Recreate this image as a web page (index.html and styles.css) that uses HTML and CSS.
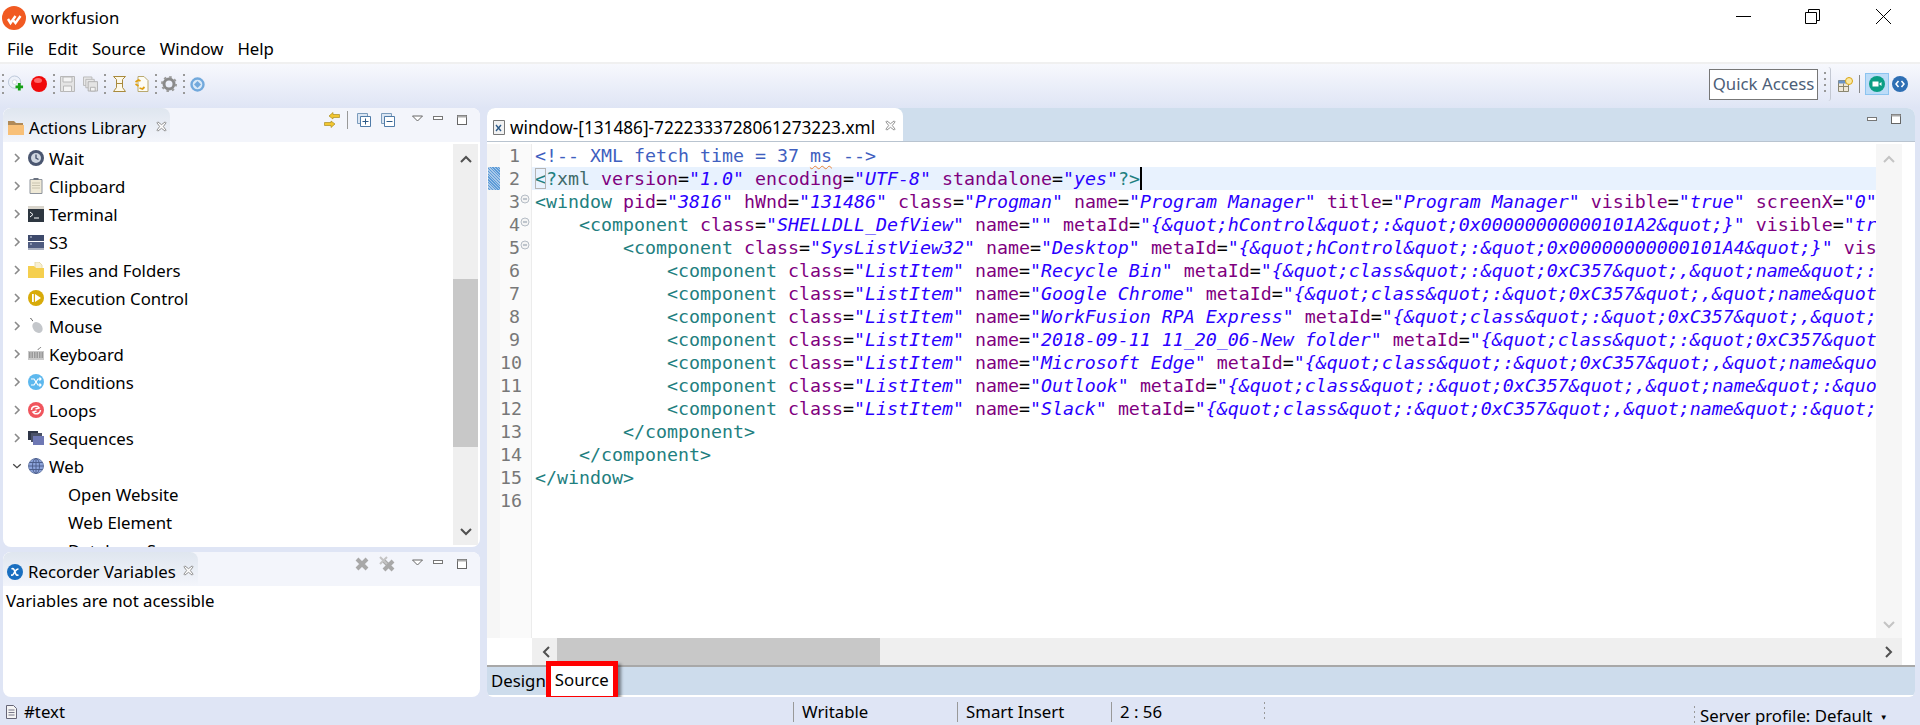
FILE: index.html
```html
<!DOCTYPE html>
<html lang="en">
<head>
    <meta charset="UTF-8">
    <meta name="viewport" content="width=device-width, initial-scale=1.0">
    <title>workfusion</title>
    <link rel="stylesheet" href="styles.css">
</head>
<body>
    <!-- shared little icons -->
    <svg class="defs" width="0" height="0">
        <symbol id="chev" viewBox="0 0 10 12"><path d="M3 2l4 4-4 4" fill="none" stroke="#8a8a8a" stroke-width="1.6"/></symbol>
        <symbol id="chev-open" viewBox="0 0 12 10"><path d="M1.5 3l4.5 4 4.5-4" fill="none" stroke="#444" stroke-width="1.6"/></symbol>
        <symbol id="close" viewBox="0 0 12 12"><path d="M2 1l4 3 4-3 1 1-3 4 3 4-1 1-4-3-4 3-1-1 3-4-3-4z" fill="#fff" stroke="#888"/></symbol>
        <symbol id="drop" viewBox="0 0 11 7"><path d="M.5 1h10l-5 5z" fill="#fff" stroke="#666"/></symbol>
        <symbol id="min" viewBox="0 0 11 5"><rect x=".5" y=".5" width="9" height="3" fill="#fff" stroke="#777"/></symbol>
        <symbol id="max" viewBox="0 0 11 11"><rect x=".5" y=".5" width="9" height="9" fill="#fff" stroke="#666"/><rect x=".5" y=".5" width="9" height="2" fill="#aaa"/></symbol>
        <symbol id="fold" viewBox="0 0 10 10"><circle cx="5" cy="5" r="4" fill="#f4f4f4" stroke="#b5bcc5"/><path d="M3 5h4" stroke="#8996a5"/></symbol>
    </svg>

    <header class="titlebar">
        <svg class="logo" width="24" height="24" viewBox="0 0 24 24">
            <circle cx="12" cy="12" r="12" fill="#f15a22"/>
            <path d="M6 13l2.500 4 5-7M11 14l2.500 3 5-7" fill="none" stroke="#fff" stroke-width="2.400"/>
        </svg>
        <span class="app-name">workfusion</span>
        <div class="win-controls">
            <svg width="15" height="15" viewBox="0 0 15 15"><path d="M0 7.500h15" stroke="#000"/></svg>
            <svg class="win-restore" width="15" height="15" viewBox="0 0 15 15"><path d="M3.500 3V.5h11v11H12M.5 3.500h11v11H.5z" fill="none" stroke="#000"/></svg>
            <svg width="15" height="15" viewBox="0 0 15 15"><path d="M0 0l15 15M15 0L0 15" stroke="#000"/></svg>
        </div>
    </header>

    <nav class="menubar">
        <span>File</span><span>Edit</span><span>Source</span><span>Window</span><span>Help</span>
    </nav>

    <div class="toolbar">
        <i class="grip"></i>
        <svg class="tool tool-first" width="16" height="18" viewBox="0 0 17 18">
            <circle cx="7" cy="7" r="6.500" fill="#eef2fa" stroke="#b9c4d6"/><circle cx="7" cy="7" r="2.500" fill="#fff" stroke="#cfd6e2"/>
            <path d="M12 8v8M8 12h8" stroke="#16a016" stroke-width="3"/>
        </svg>
        <svg class="tool tool-rec" width="16" height="16" viewBox="0 0 16 16"><circle cx="8" cy="8" r="8" fill="#f00a0a"/><ellipse cx="7" cy="4.500" rx="4" ry="2.500" fill="#ff6a6a"/></svg>
        <i class="grip"></i>
        <svg class="tool" width="15" height="16" viewBox="0 0 15 16"><path d="M.5.5h14v15H.5z" fill="#e4e4e4" stroke="#b8b8b8"/><path d="M3 1h9v5H3zM3.500 10h8v5.500h-8z" fill="#f4f4f4" stroke="#b8b8b8"/></svg>
        <svg class="tool tool-wide" width="15" height="16" viewBox="0 0 16 16"><path d="M.5.5h9v9h-9z" fill="#e8e8e8" stroke="#b8b8b8"/><path d="M3 3h9v9H3z" fill="#e8e8e8" stroke="#b8b8b8"/><path d="M5.500 5.500h10v10h-10z" fill="#e4e4e4" stroke="#b0b0b0"/><path d="M8 11.500h5v4H8z" fill="#f4f4f4" stroke="#b0b0b0"/></svg>
        <i class="grip"></i>
        <svg class="tool tool-after" width="13" height="16" viewBox="0 0 13 16"><path d="M.5.5h12l-3 3v8l3 4H.5l3-4v-8z" fill="#fdf8e8" stroke="#a98a3c"/><path d="M3.500 7.500h6" stroke="#a98a3c"/></svg>
        <svg class="tool tool-wide" width="15" height="16" viewBox="0 0 14 16"><path d="M3.500.5h6l4 4v11h-10z" fill="#fdfcf4" stroke="#b9a970"/><path d="M1 6l3-2 2 1M1 8l3 2M5 12l3 1 2-2" fill="none" stroke="#e0a010" stroke-width="1.800"/></svg>
        <i class="grip"></i>
        <svg class="tool tool-first" width="16" height="16" viewBox="0 0 16 16"><circle cx="8" cy="8" r="5" fill="none" stroke="#8a8a8a" stroke-width="3"/><circle cx="8" cy="8" r="7" fill="none" stroke="#9a9a9a" stroke-width="2" stroke-dasharray="2.500 3"/></svg>
        <i class="grip"></i>
        <svg class="tool" width="15" height="15" viewBox="0 0 15 15"><circle cx="7.500" cy="7.500" r="6" fill="#d9e9f8" stroke="#72a9dc" stroke-width="2.400"/><path d="M7.500 4l3.500 3.500L7.500 11 4 7.500z" fill="#72a9dc"/></svg>

        <div class="toolbar-right">
            <div class="quick-access">Quick Access</div>
            <i class="grip grip-tall"></i>
            <i class="curve"></i>
            <svg width="15" height="15" viewBox="0 0 15 15"><path d="M.5 3.500h10v11H.5z" fill="#efe8d8" stroke="#8a8670"/><path d="M.5 3.500h10v3H.5z" fill="#6b94c8"/><path d="M.5 9.500h10M5.500 6.500v8" stroke="#8a8670"/><circle cx="11" cy="4" r="3.500" fill="#fbe9a0" stroke="#d9a514"/></svg>
            <i class="bar"></i>
            <div class="perspective active">
                <svg width="16" height="16" viewBox="0 0 16 16"><circle cx="8" cy="8" r="8" fill="#0b9e85"/><path d="M3.500 5.500h6v5h-6zM10 8l2.500-2v4z" fill="#fff"/></svg>
            </div>
            <svg width="16" height="16" viewBox="0 0 16 16"><circle cx="8" cy="8" r="8" fill="#2e6fb4"/><path d="M6.500 5L4 8l2.500 3M9.500 5L12 8l-2.500 3" fill="none" stroke="#fff" stroke-width="1.500"/></svg>
        </div>
    </div>

    <main class="workbench">
        <div class="left-col">
            <section class="panel panel-library">
                <div class="panel-head">
                    <div class="view-tab tab-library">
                        <svg width="16" height="15" viewBox="0 0 16 15"><path d="M0 1h6l2 2h7v3H0z" fill="#b08a58"/><path d="M0 5h16v10H0z" fill="#f8c078"/></svg>
                        <span>Actions Library</span>
                        <svg class="tab-x" width="11" height="11"><use href="#close"/></svg>
                    </div>
                    <div class="head-tools">
                        <svg width="16" height="16" viewBox="0 0 16 16"><path d="M9 .5L5 4l4 3V5.500h6.500v-3H9zM7 15.500L11 12 7 9v1.500H.5v3H7z" fill="#f2c630" stroke="#a98c22" stroke-width=".7"/></svg>
                        <i class="bar bar-head"></i>
                        <svg class="gap-s" width="14" height="14" viewBox="0 0 14 14"><path d="M.5.5h10v10H.5z" fill="#dbe6f3" stroke="#7c9cbc"/><path d="M3.500 3.500h10v10h-10z" fill="#fff" stroke="#4f7ba8"/><path d="M8.500 5.500v6M5.500 8.500h6" stroke="#2d5a88"/></svg>
                        <svg class="gap-m" width="14" height="14" viewBox="0 0 14 14"><path d="M.5.500h10v10H.5z" fill="#dbe6f3" stroke="#7c9cbc"/><path d="M3.500 3.500h10v10h-10z" fill="#fff" stroke="#4f7ba8"/><path d="M5.500 8.500h6" stroke="#2d5a88"/></svg>
                        <svg class="gap-drop" width="11" height="7"><use href="#drop"/></svg>
                        <svg class="gap-min" width="11" height="5"><use href="#min"/></svg>
                        <svg class="gap-max" width="11" height="11"><use href="#max"/></svg>
                    </div>
                </div>
                <div class="panel-body">
                    <ul class="tree">
                        <li><svg class="tw" width="10" height="12"><use href="#chev"/></svg>
                            <svg width="16" height="16" viewBox="0 0 16 16"><circle cx="8" cy="8" r="8" fill="#4a5670"/><circle cx="8" cy="8" r="5" fill="#cfd6e0"/><path d="M8 4.500V8l2.500 1.500" fill="none" stroke="#4a5670" stroke-width="1.400"/></svg>
                            <span>Wait</span></li>
                        <li><svg class="tw" width="10" height="12"><use href="#chev"/></svg>
                            <svg width="16" height="16" viewBox="0 0 16 16"><path d="M2 1.500h12v14H2z" fill="#efe9d6" stroke="#8e949c"/><path d="M4 5h8M4 7.500h8M4 10h8" stroke="#c9c4b0"/><path d="M5.500 0h5v2h-5z" fill="#6b7280"/></svg>
                            <span>Clipboard</span></li>
                        <li><svg class="tw" width="10" height="12"><use href="#chev"/></svg>
                            <svg width="16" height="16" viewBox="0 0 16 16"><path d="M0 0h16v16H0z" fill="#2d3640"/><path d="M0 0h16v3H0z" fill="#d9d5cc"/><path d="M2 6l3 2.500L2 11M6 12h5" fill="none" stroke="#fff"/></svg>
                            <span>Terminal</span></li>
                        <li><svg class="tw" width="10" height="12"><use href="#chev"/></svg>
                            <svg width="16" height="16" viewBox="0 0 16 16"><path d="M0 1h16v6H0z" fill="#3e4a6b"/><path d="M0 8h16v6H0z" fill="#4f5c80"/><path d="M0 14h16v2H0z" fill="#aab0c0"/><path d="M2 3h2M2 10h2" stroke="#cdd3e2"/></svg>
                            <span>S3</span></li>
                        <li><svg class="tw" width="10" height="12"><use href="#chev"/></svg>
                            <svg width="16" height="16" viewBox="0 0 16 16"><path d="M7 0h4l3 3v5H7z" fill="#f7efd0" stroke="#e8dcae"/><path d="M0 4h6l2 2h8v10H0z" fill="#f5cf4e"/></svg>
                            <span>Files and Folders</span></li>
                        <li><svg class="tw" width="10" height="12"><use href="#chev"/></svg>
                            <svg width="16" height="16" viewBox="0 0 16 16"><circle cx="8" cy="8" r="8" fill="#d8ab0a"/><path d="M4 4h1.800v8H4zM7 4l6 4-6 4z" fill="#fff"/></svg>
                            <span>Execution Control</span></li>
                        <li><svg class="tw" width="10" height="12"><use href="#chev"/></svg>
                            <svg width="16" height="16" viewBox="0 0 16 16"><path d="M2 0c2 0 1 2 3 3" fill="none" stroke="#666"/><ellipse cx="9.500" cy="9.500" rx="4.500" ry="6" transform="rotate(-40 9.500 9.500)" fill="#c4c7cb"/></svg>
                            <span>Mouse</span></li>
                        <li><svg class="tw" width="10" height="12"><use href="#chev"/></svg>
                            <svg width="16" height="16" viewBox="0 0 16 16"><path d="M0 5h16v9H0z" fill="#c9c9c9"/><path d="M1 7h14M1 9h14M1 11h14" stroke="#6a6a6a" stroke-dasharray="1.500 1"/><path d="M10 4c0-2 2-1 3-3" fill="none" stroke="#888"/></svg>
                            <span>Keyboard</span></li>
                        <li><svg class="tw" width="10" height="12"><use href="#chev"/></svg>
                            <svg width="16" height="16" viewBox="0 0 16 16"><circle cx="8" cy="8" r="8" fill="#5db8ee"/><path d="M3 5h3l4 6h3M3 11h3l4-6h3M11.500 3.500L13 5l-1.500 1.500M11.500 9.500L13 11l-1.500 1.500" fill="none" stroke="#fff" stroke-width="1.200"/></svg>
                            <span>Conditions</span></li>
                        <li><svg class="tw" width="10" height="12"><use href="#chev"/></svg>
                            <svg width="16" height="16" viewBox="0 0 16 16"><circle cx="8" cy="8" r="8" fill="#f0555d"/><path d="M3.500 8c0-3 3-4.500 6-3.500L11 6 7.500 7M12.500 8c0 3-3 4.500-6 3.500L5 10l3.500-1" fill="none" stroke="#fff" stroke-width="1.500"/></svg>
                            <span>Loops</span></li>
                        <li><svg class="tw" width="10" height="12"><use href="#chev"/></svg>
                            <svg width="16" height="16" viewBox="0 0 16 16"><path d="M0 1h10v9H0z" fill="#2f3648"/><path d="M3 3h11v9H3z" fill="#4b5268"/><path d="M5 6h11v9H5z" fill="#6e78b4"/></svg>
                            <span>Sequences</span></li>
                        <li><svg class="tw" width="12" height="10"><use href="#chev-open"/></svg>
                            <svg width="16" height="16" viewBox="0 0 16 16"><circle cx="8" cy="8" r="7.500" fill="#8da4dc" stroke="#6d7fa8"/><ellipse cx="8" cy="8" rx="3.500" ry="7.500" fill="none" stroke="#4e5f8c"/><path d="M.5 8h15M1.500 4.500h13M1.500 11.500h13M8 .5v15" stroke="#4e5f8c"/></svg>
                            <span>Web</span></li>
                        <li class="leaf">Open Website</li>
                        <li class="leaf">Web Element</li>
                        <li class="leaf">Database Source</li>
                    </ul>
                    <div class="vscroll">
                        <svg class="arrow" width="12" height="8" viewBox="0 0 12 8"><path d="M1 7l5-5 5 5" fill="none" stroke="#505050" stroke-width="2"/></svg>
                        <div class="vthumb"></div>
                        <svg class="arrow" width="12" height="8" viewBox="0 0 12 8"><path d="M1 1l5 5 5-5" fill="none" stroke="#505050" stroke-width="2"/></svg>
                    </div>
                </div>
            </section>

            <section class="panel panel-vars">
                <div class="panel-head">
                    <div class="view-tab tab-vars">
                        <svg width="16" height="16" viewBox="0 0 16 16"><circle cx="8" cy="8" r="8" fill="#1a6fc0"/><path d="M4.500 5c2-1 2.500 0 3.500 3s1.500 3.500 3.500 3M11.500 5c-2 0-4 3-5 5s-2 1-2.500 1" fill="none" stroke="#fff" stroke-width="1.600"/></svg>
                        <span>Recorder Variables</span>
                        <svg class="tab-x" width="11" height="11"><use href="#close"/></svg>
                    </div>
                    <div class="head-tools">
                        <svg width="14" height="14" viewBox="0 0 14 14"><path d="M2 2l10 10M12 2L2 12" stroke="#a8a8a8" stroke-width="4"/></svg>
                        <svg class="gap-m" width="16" height="16" viewBox="0 0 16 16"><path d="M5 5l9 9M14 5l-9 9" stroke="#a8a8a8" stroke-width="4"/><path d="M1 1l7 7M8 1L1 8" stroke="#c4c4c4" stroke-width="2"/></svg>
                        <svg class="gap-drop" width="11" height="7"><use href="#drop"/></svg>
                        <svg class="gap-min" width="11" height="5"><use href="#min"/></svg>
                        <svg class="gap-max" width="11" height="11"><use href="#max"/></svg>
                    </div>
                </div>
                <p class="vars-note">Variables are not acessible</p>
            </section>
        </div>

        <section class="panel panel-editor">
            <div class="panel-head editor-head">
                <div class="view-tab tab-editor">
                    <svg width="12" height="15" viewBox="0 0 12 15"><path d="M.5.5h11v14H.5z" fill="#f2f2f2" stroke="#777"/><path d="M3 5l5 6M8 5l-5 6" stroke="#2d5a88" stroke-width="1.400"/></svg>
                    <span>window-[131486]-7222333728061273223.xml</span>
                    <svg class="tab-x" width="11" height="11"><use href="#close"/></svg>
                </div>
                <div class="head-tools tools-editor">
                    <svg width="11" height="5"><use href="#min"/></svg>
                    <svg class="gap-max" width="11" height="11"><use href="#max"/></svg>
                </div>
            </div>

            <div class="editor-body">
                <div class="ruler"><i class="ruler-mark"></i></div>
                <div class="gutter">
                    <div class="ln">1</div>
                    <div class="ln">2</div>
                    <div class="ln">3<svg class="fold" width="10" height="10"><use href="#fold"/></svg></div>
                    <div class="ln">4<svg class="fold" width="10" height="10"><use href="#fold"/></svg></div>
                    <div class="ln">5<svg class="fold" width="10" height="10"><use href="#fold"/></svg></div>
                    <div class="ln">6</div>
                    <div class="ln">7</div>
                    <div class="ln">8</div>
                    <div class="ln">9</div>
                    <div class="ln">10</div>
                    <div class="ln">11</div>
                    <div class="ln">12</div>
                    <div class="ln">13</div>
                    <div class="ln">14</div>
                    <div class="ln">15</div>
                    <div class="ln">16</div>
                </div>
                <div class="code">
                    <div class="cl"><span class="cm">&lt;!-- XML fetch time = 37 <u>ms</u> --&gt;</span></div>
                    <div class="cl cl-current"><span class="tg"><b class="match">&lt;</b>?</span><span class="pi">xml</span> <span class="an">version</span>=<span class="av">"1.0"</span> <span class="an">encoding</span>=<span class="av">"UTF-8"</span> <span class="an">standalone</span>=<span class="av">"yes"</span><span class="tg">?&gt;</span><i class="caret"></i></div>
                    <div class="cl"><span class="tg">&lt;window</span> <span class="an">pid</span>=<span class="av">"3816"</span> <span class="an">hWnd</span>=<span class="av">"131486"</span> <span class="an">class</span>=<span class="av">"Progman"</span> <span class="an">name</span>=<span class="av">"Program Manager"</span> <span class="an">title</span>=<span class="av">"Program Manager"</span> <span class="an">visible</span>=<span class="av">"true"</span> <span class="an">screenX</span>=<span class="av">"0"</span></div>
                    <div class="cl">    <span class="tg">&lt;component</span> <span class="an">class</span>=<span class="av">"SHELLDLL_DefView"</span> <span class="an">name</span>=<span class="av">""</span> <span class="an">metaId</span>=<span class="av">"{&amp;quot;hControl&amp;quot;:&amp;quot;0x00000000000101A2&amp;quot;}"</span> <span class="an">visible</span>=<span class="av">"tr</span></div>
                    <div class="cl">        <span class="tg">&lt;component</span> <span class="an">class</span>=<span class="av">"SysListView32"</span> <span class="an">name</span>=<span class="av">"Desktop"</span> <span class="an">metaId</span>=<span class="av">"{&amp;quot;hControl&amp;quot;:&amp;quot;0x00000000000101A4&amp;quot;}"</span> <span class="an">vis</span></div>
                    <div class="cl">            <span class="tg">&lt;component</span> <span class="an">class</span>=<span class="av">"ListItem"</span> <span class="an">name</span>=<span class="av">"Recycle Bin"</span> <span class="an">metaId</span>=<span class="av">"{&amp;quot;class&amp;quot;:&amp;quot;0xC357&amp;quot;,&amp;quot;name&amp;quot;:</span></div>
                    <div class="cl">            <span class="tg">&lt;component</span> <span class="an">class</span>=<span class="av">"ListItem"</span> <span class="an">name</span>=<span class="av">"Google Chrome"</span> <span class="an">metaId</span>=<span class="av">"{&amp;quot;class&amp;quot;:&amp;quot;0xC357&amp;quot;,&amp;quot;name&amp;quot</span></div>
                    <div class="cl">            <span class="tg">&lt;component</span> <span class="an">class</span>=<span class="av">"ListItem"</span> <span class="an">name</span>=<span class="av">"WorkFusion RPA Express"</span> <span class="an">metaId</span>=<span class="av">"{&amp;quot;class&amp;quot;:&amp;quot;0xC357&amp;quot;,&amp;quot;</span></div>
                    <div class="cl">            <span class="tg">&lt;component</span> <span class="an">class</span>=<span class="av">"ListItem"</span> <span class="an">name</span>=<span class="av">"2018-09-11 11_20_06-New folder"</span> <span class="an">metaId</span>=<span class="av">"{&amp;quot;class&amp;quot;:&amp;quot;0xC357&amp;quot</span></div>
                    <div class="cl">            <span class="tg">&lt;component</span> <span class="an">class</span>=<span class="av">"ListItem"</span> <span class="an">name</span>=<span class="av">"Microsoft Edge"</span> <span class="an">metaId</span>=<span class="av">"{&amp;quot;class&amp;quot;:&amp;quot;0xC357&amp;quot;,&amp;quot;name&amp;quo</span></div>
                    <div class="cl">            <span class="tg">&lt;component</span> <span class="an">class</span>=<span class="av">"ListItem"</span> <span class="an">name</span>=<span class="av">"Outlook"</span> <span class="an">metaId</span>=<span class="av">"{&amp;quot;class&amp;quot;:&amp;quot;0xC357&amp;quot;,&amp;quot;name&amp;quot;:&amp;quo</span></div>
                    <div class="cl">            <span class="tg">&lt;component</span> <span class="an">class</span>=<span class="av">"ListItem"</span> <span class="an">name</span>=<span class="av">"Slack"</span> <span class="an">metaId</span>=<span class="av">"{&amp;quot;class&amp;quot;:&amp;quot;0xC357&amp;quot;,&amp;quot;name&amp;quot;:&amp;quot;</span></div>
                    <div class="cl">        <span class="tg">&lt;/component&gt;</span></div>
                    <div class="cl">    <span class="tg">&lt;/component&gt;</span></div>
                    <div class="cl"><span class="tg">&lt;/window&gt;</span></div>
                </div>
                <div class="vscroll vscroll-editor">
                    <svg class="arrow" width="12" height="8" viewBox="0 0 12 8"><path d="M1 7l5-5 5 5" fill="none" stroke="#c4c4c4" stroke-width="2"/></svg>
                    <svg class="arrow" width="12" height="8" viewBox="0 0 12 8"><path d="M1 1l5 5 5-5" fill="none" stroke="#c4c4c4" stroke-width="2"/></svg>
                </div>
            </div>

            <div class="hscroll-row">
                <div class="hscroll">
                    <svg width="8" height="12" viewBox="0 0 8 12"><path d="M7 1L2 6l5 5" fill="none" stroke="#505050" stroke-width="2"/></svg>
                    <div class="hthumb"></div>
                    <svg class="arrow-right" width="8" height="12" viewBox="0 0 8 12"><path d="M1 1l5 5-5 5" fill="none" stroke="#505050" stroke-width="2"/></svg>
                </div>
            </div>

            <div class="page-tabs">
                <span class="page-tab">Design</span>
                <span class="page-tab page-tab-on">Source</span>
            </div>
        </section>
    </main>

    <footer class="statusbar">
        <div class="status-node">
            <svg width="11" height="14" viewBox="0 0 11 14"><path d="M.5.5h7l3 3v10H.5z" fill="#f4f4f4" stroke="#667"/><path d="M2.500 5h6M2.500 7.500h6M2.500 10h6" stroke="#778"/></svg>
            <span>#text</span>
        </div>
        <div class="status-cell cell-write">Writable</div>
        <div class="status-cell cell-insert">Smart Insert</div>
        <div class="status-cell cell-pos">2 : 56</div>
        <div class="status-dots"></div>
        <div class="status-server">Server profile: Default <small>▼</small></div>
    </footer>
</body>
</html>
```

FILE: styles.css
```css
* {
    box-sizing: border-box;
}

html, body {
    height: 100%;
}

body {
    margin: 0;
    width: 1920px;
    height: 725px;
    overflow: hidden;
    display: flex;
    flex-direction: column;
    background-color: #dfe5f5;
    color: #000;
    font-family: "Noto Sans", sans-serif;
    font-size: 16.8px;
}

svg {
    flex: none;
    display: block;
}

.defs {
    position: absolute;
}

/* window chrome */
.titlebar {
    height: 30px;
    flex: none;
    display: flex;
    align-items: center;
    background-color: #fff;
    padding: 5px 0 0 2px;
}

.app-name {
    margin-left: 5px;
    font-size: 16.8px;
}

.win-controls {
    margin-left: auto;
    margin-right: 29px;
    margin-top: -3px;
    display: flex;
    gap: 54px;
}

.win-restore {
    margin-right: 2px;
}

.menubar {
    height: 32px;
    flex: none;
    display: flex;
    gap: 14px;
    padding: 7px 0 0 7px;
    line-height: 23px;
    background-color: #fff;
}

.toolbar {
    height: 46px;
    flex: none;
    display: flex;
    align-items: center;
    padding: 0 0 4px 2px;
    border-top: 2px solid #f0f0f0;
    background: linear-gradient(#f7f8fd, #dfe5f5);
}

.tool {
    margin-left: 5px;
}

.tool-first {
    margin-left: 4px;
}

.tool-rec {
    margin-left: 7px;
}

.tool-wide {
    margin-left: 8px;
}

.tool-after {
    margin-left: 7px;
}

.grip {
    flex: none;
    width: 2px;
    height: 20px;
    margin-left: 6px;
    background: repeating-linear-gradient(#999 0 2px, transparent 2px 6px);
}

.grip:first-child {
    margin-left: 0;
}

.grip-tall {
    height: 24px;
    margin-left: 6px;
}

.curve {
    width: 3px;
    height: 34px;
    margin: 0 7px 0 2px;
    border-right: 1px solid #c3c8d2;
    border-radius: 0 3px 3px 0;
}

.toolbar-right {
    margin-left: auto;
    margin-right: 12px;
    display: flex;
    align-items: center;
}

.quick-access {
    width: 109px;
    height: 31px;
    border: 1px solid #777;
    background-color: #fff;
    color: #4d5e78;
    text-align: center;
    line-height: 28px;
    white-space: nowrap;
}

.bar {
    flex: none;
    width: 1px;
    height: 18px;
    margin: 0 5px 0 6px;
    background-color: #888;
}

.perspective {
    width: 24px;
    height: 22px;
    display: flex;
    align-items: center;
    justify-content: center;
    margin-right: 3px;
}

.perspective.active {
    background-color: #bcdcf8;
    border: 1px solid #8cc4f0;
}

/* workbench panels */
.workbench {
    height: 589px;
    flex: none;
    display: flex;
    gap: 7px;
    padding: 0 5px 0 3px;
}

.left-col {
    width: 477px;
    flex: none;
    display: flex;
    flex-direction: column;
    gap: 5px;
}

.panel {
    display: flex;
    flex-direction: column;
    background-color: #fff;
    border-radius: 8px;
    overflow: hidden;
}

.panel-library {
    height: 439px;
}

.panel-vars {
    height: 145px;
}

.panel-editor {
    flex: 1;
    min-width: 0;
    border-radius: 8px 8px 6px 6px;
}

.panel-head {
    height: 34px;
    flex: none;
    display: flex;
    background-color: #f3f5fb;
}

.view-tab {
    display: flex;
    align-items: center;
    gap: 5px;
    padding: 5px 0 0 5px;
    border-radius: 8px 8px 0 0;
    background: linear-gradient(#dfe6ef, #f3f5fb);
    white-space: nowrap;
}

.view-tab .tab-x {
    margin-left: 5px;
    margin-top: -3px;
}

.tab-library {
    width: 167px;
}

.tab-vars {
    width: 195px;
    padding-left: 4px;
}

.tab-vars .tab-x {
    margin-left: 2px;
}

.head-tools {
    margin-left: auto;
    display: flex;
    align-items: center;
    padding: 0 12px 10px 0;
}

.bar-head {
    height: 18px;
    margin: 0 0 0 7px;
    background-color: #999;
}

.gap-s {
    margin-left: 9px;
}

.gap-m {
    margin-left: 10px;
}

.gap-drop {
    margin-left: 17px;
    margin-top: -3px;
}

.gap-min {
    margin-left: 10px;
    margin-top: -4px;
}

.gap-max {
    margin-left: 13px;
}

.tools-editor {
    padding: 0 13px 10px 0;
}

.panel-body {
    flex: 1;
    min-height: 0;
    display: flex;
    padding-top: 2px;
}

.tree {
    flex: 1;
    list-style: none;
    margin: 0;
    padding: 0 0 0 9px;
    overflow: hidden;
}

.tree li {
    height: 28px;
    display: flex;
    align-items: center;
    white-space: nowrap;
}

.tree .tw {
    width: 10px;
    margin-right: 6px;
}

.tree li span {
    margin-left: 5px;
}

.tree .leaf {
    padding-left: 56px;
}

.vscroll {
    width: 25px;
    flex: none;
    margin: 0 2px 2px 0;
    display: flex;
    flex-direction: column;
    align-items: center;
    justify-content: space-between;
    padding: 11px 0 9px;
    background-color: #efefef;
    position: relative;
}

.vthumb {
    position: absolute;
    left: 0;
    right: 0;
    top: 135px;
    height: 168px;
    background-color: #c8c8c8;
}

.vars-note {
    margin: 3px 0 0 3px;
}

/* editor */
.editor-head {
    background-color: #cfdeed;
    border-bottom: 1px solid #b9c4d0;
}

.tab-editor {
    width: 416px;
    padding-left: 6px;
    background: #fff;
    font-size: 17.2px;
}

.editor-body {
    flex: 1;
    min-height: 0;
    display: flex;
    padding-top: 2px;
    font-family: "DejaVu Sans Mono", monospace;
    font-size: 18.27px;
    line-height: 23px;
}

.ruler {
    width: 13px;
    flex: none;
    background-color: #f6f6f6;
    padding-top: 23px;
}

.ruler-mark {
    display: block;
    width: 12px;
    height: 23px;
    margin-left: 1px;
    background-color: #5b9bd8;
    background-image: repeating-linear-gradient(45deg, #a9c8e8 0 1px, transparent 1px 2px);
}

.gutter {
    width: 32px;
    flex: none;
    background-color: #fafafa;
    border-right: 1px solid #ececec;
    color: #787878;
}

.ln {
    height: 23px;
    padding-right: 11px;
    text-align: right;
    position: relative;
}

.fold {
    position: absolute;
    right: 1px;
    top: 4px;
}

.code {
    flex: 1;
    min-width: 0;
    overflow: hidden;
}

.cl {
    height: 23px;
    padding-left: 3px;
    white-space: pre;
}

.cl-current {
    background-color: #e8f2fe;
}

.cm {
    color: #3f5fbf;
}

.cm u {
    text-decoration: underline wavy #e8833a 1px;
    text-underline-offset: 3px;
}

.tg {
    color: #1f8080;
}

.pi {
    color: #3f6a6a;
}

.an {
    color: #7f007f;
}

.av {
    color: #2a00ff;
    font-style: italic;
}

.match {
    font-weight: normal;
    outline: 1px solid #b4b4b4;
    outline-offset: -1px;
}

.caret {
    display: inline-block;
    width: 2px;
    height: 23px;
    vertical-align: top;
    background-color: #000;
}

.vscroll-editor {
    width: 26px;
    margin: 0 13px 0 0;
    padding: 11px 0 9px;
    background-color: #f6f6f6;
}

.hscroll-row {
    height: 27px;
    flex: none;
    padding: 0 13px 0 45px;
    background-color: #fff;
}

.hscroll {
    height: 100%;
    display: flex;
    align-items: center;
    padding-left: 10px;
    background-color: #efefef;
}

.hthumb {
    width: 323px;
    height: 100%;
    margin-left: 7px;
    background-color: #c8c8c8;
}

.arrow-right {
    margin-left: auto;
    margin-right: 9px;
}

.page-tabs {
    height: 30px;
    flex: none;
    margin-bottom: 2px;
    display: flex;
    padding-left: 4px;
    background-color: #cddcec;
    border-top: 2px solid #a8a8a8;
}

.page-tab {
    line-height: 28px;
}

.page-tab-on {
    width: 62px;
    height: 30px;
    margin: -1px 0 0 5px;
    text-align: center;
    background-color: #fff;
    box-shadow: 0 0 0 5px #f00, 3px 3px 3px 5px rgba(0, 0, 0, 0.45);
}

/* status line */
.statusbar {
    flex: 1;
    display: flex;
    padding-top: 5px;
    white-space: nowrap;
    line-height: 20px;
    overflow: hidden;
}

.status-node {
    width: 793px;
    display: flex;
    gap: 7px;
    padding-left: 6px;
    align-items: center;
    height: 20px;
}

.status-cell {
    height: 20px;
    padding-left: 8px;
    border-left: 1px solid #999;
}

.cell-write {
    width: 164px;
}

.cell-insert {
    width: 154px;
}

.cell-pos {
    width: 153px;
}

.status-dots {
    width: 430px;
    height: 20px;
    background: repeating-linear-gradient(#999 0 2px, transparent 2px 5px) left top / 1px 100% no-repeat;
}

.status-server {
    margin-top: 4px;
    padding-left: 6px;
    background: repeating-linear-gradient(#999 0 2px, transparent 2px 5px) left top / 1px 100% no-repeat;
}

.status-server small {
    font-size: 8px;
    vertical-align: 2px;
    margin-left: 3px;
}
```
